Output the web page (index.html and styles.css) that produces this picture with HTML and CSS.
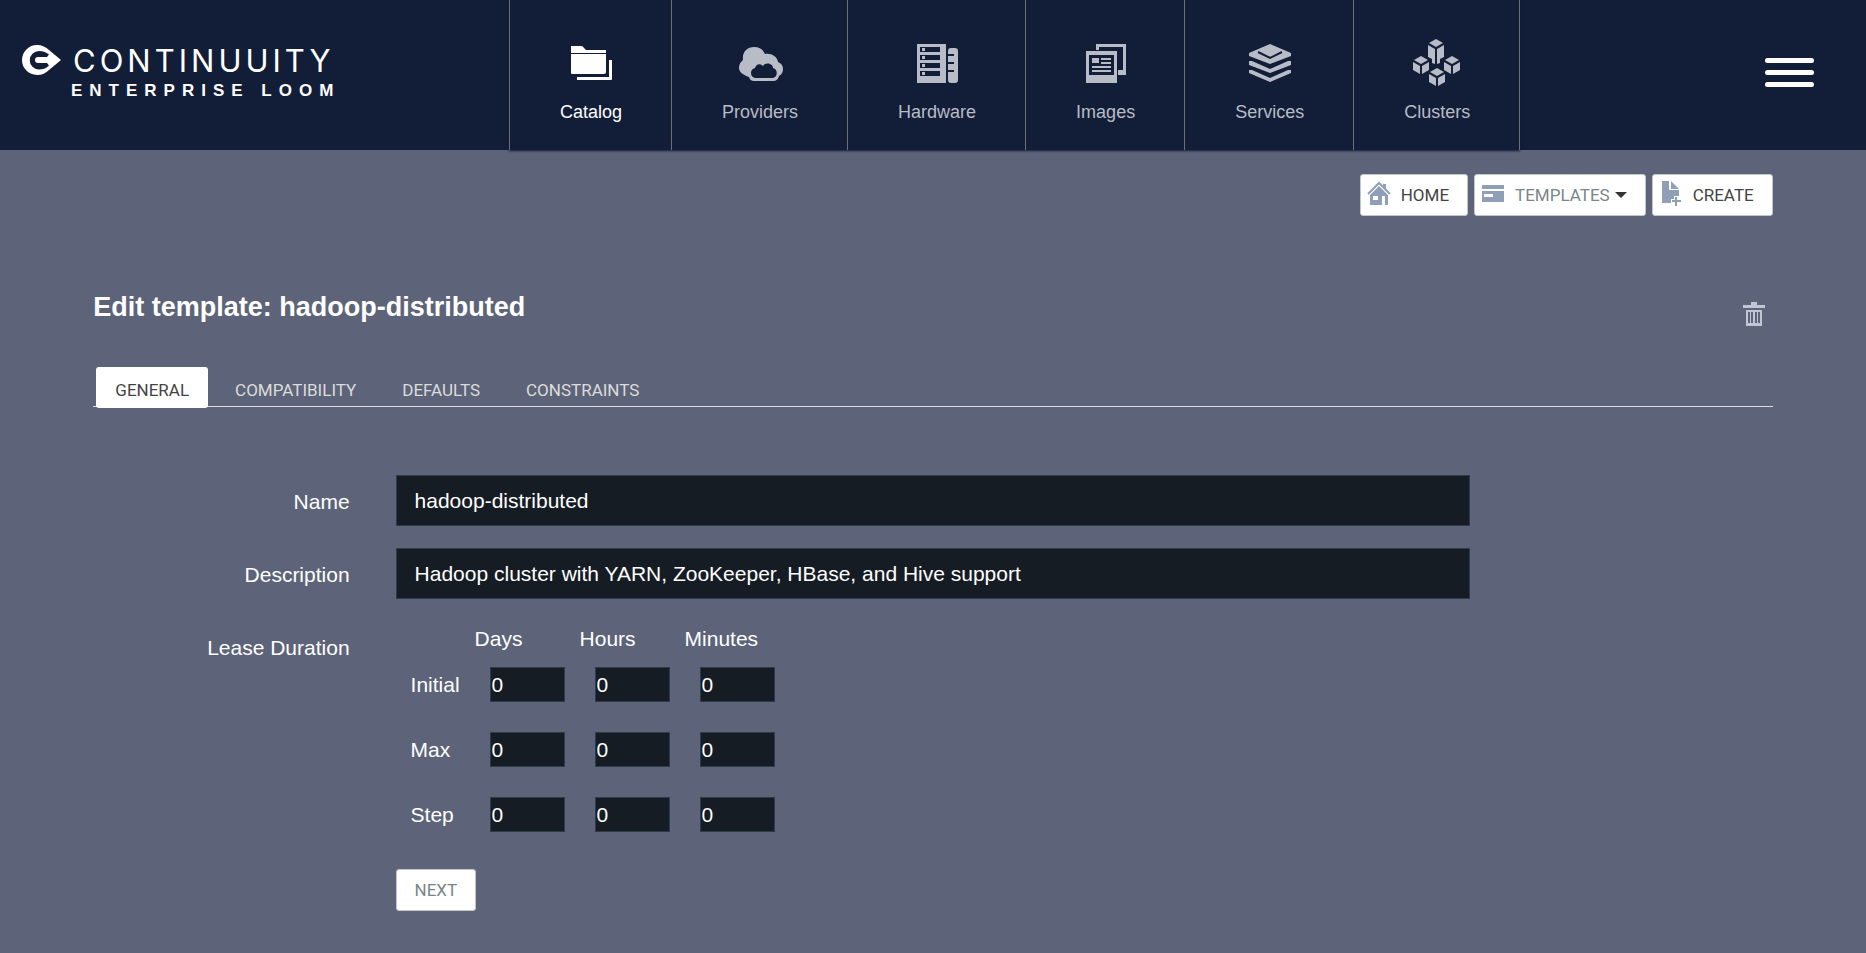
FILE: index.html
```html
<!DOCTYPE html>
<html lang="en">
<head>
<meta charset="utf-8">
<title>Continuuity Enterprise Loom</title>
<link rel="stylesheet" href="styles.css">
</head>
<body>
<header class="topbar">
  <a class="logo" href="#">
    <svg class="logo-mark" viewBox="0 0 40 30" width="40" height="30" aria-hidden="true">
      <path fill="#fff" d="M15 0C20 0 24 2 27 5L39 15 27 25C24 28 20 30 15 30A15 15 0 0 1 15 0Z"/>
      <path fill="#121d38" d="M27 9.500C24 7 20.500 6 17 6A9 9 0 0 0 17 24.500C20.500 24.500 24 23.500 27 20.500L25 18H16A3 3 0 0 1 16 12H25Z"/>
    </svg>
    <span class="logo-text"><span class="logo-name">CONTINUUITY</span><span class="logo-sub">ENTERPRISE LOOM</span></span>
  </a>
  <nav class="nav">
    <a class="nav-item active" href="#">
      <svg viewBox="0 0 48 48" width="48" height="48" aria-hidden="true"><g fill="currentColor"><path d="M4 6h10q2 0 3 2l2 2h20v3H4z"/><path d="M4 14h35v18q0 2-2 2H5q-1 0-1-1z"/><path d="M42 20h3v19q0 1-1 1H10v-3h32z"/></g></svg>
      <span>Catalog</span>
    </a>
    <a class="nav-item" href="#">
      <svg viewBox="0 0 48 48" width="48" height="48" aria-hidden="true"><path fill="currentColor" d="M13 37C7 35 3 32 3 28q0-5 4-8C6 12 11 7 18 7q8 0 11 7c6-1 12 2 13 8q5 2 5 7 0 5-4 7-1 5-6 5H18q-4 0-5-4z"/><path fill="#121d38" d="M19 38q-4-1-4-5 0-4 4-5c1-4 5-5 8-2 2-4 10-3 10 2 5 1 5 9 0 10z"/></svg>
      <span>Providers</span>
    </a>
    <a class="nav-item" href="#">
      <svg viewBox="0 0 48 48" width="48" height="48" aria-hidden="true"><path fill="currentColor" fill-rule="evenodd" d="M4 4h29v39H4zM7 7v5h20V7zm0 8v5h20v-5zm0 8v5h20v-5zm0 8v5h20v-5z"/><path fill="currentColor" d="M9 8h3v3H9zm0 8h3v3H9zm0 8h3v3H9zm0 8h3v3H9zM35 11q0-3 3-3h4q3 0 3 3v29q0 3-3 3h-4q-3 0-3-3V32h6v-2h-6v-6h6v-2h-6v-6h6v-2h-6z"/></svg>
      <span>Hardware</span>
    </a>
    <a class="nav-item" href="#">
      <svg viewBox="0 0 48 48" width="48" height="48" aria-hidden="true"><path fill="currentColor" fill-rule="evenodd" d="M4 11h31v32H4zM7 15v20h25V15z"/><path fill="currentColor" d="M10 18h7v5h-7zm9 0h10v2H19zm0 4h10v2H19zM10 26h19v2H10zm0 4h19v2H10zM14 4h30v31h-8v-5h5V7H17v3h-3z"/></svg>
      <span>Images</span>
    </a>
    <a class="nav-item" href="#">
      <svg viewBox="0 0 48 48" width="48" height="48" aria-hidden="true"><path fill="currentColor" d="M24 4L45 13v3L24 24 3 16v-3zM3 21h3l18 8 18-8h3v4L24 33 3 25zM3 30h3l18 8 18-8h3v3L24 42 3 33z"/><path fill="none" stroke="#121d38" stroke-width="2" d="M12 12l12 6 12-6"/></svg>
      <span>Services</span>
    </a>
    <a class="nav-item" href="#">
      <svg viewBox="0 0 48 48" width="48" height="48" aria-hidden="true"><g fill="currentColor"><path d="M23-1l7 4-7 4-7-4zM15 5l7 4v15l-3-1v-4l-4-2zM31 5l-7 4v15l3-1v-4l4-2z"/><path id="cube" d="M8 16l7 4-7 4-7-4zM0 22l7 4v8l-7-4zM16 22l-7 4v8l7-4z"/><use href="#cube" x="31"/><use href="#cube" x="16" y="12"/></g></svg>
      <span>Clusters</span>
    </a>
  </nav>
  <button class="menu" type="button" aria-label="Menu"><i></i><i></i><i></i></button>
</header>

<main class="page">
  <div class="toolbar">
    <a class="btn" href="#">
      <svg viewBox="0 0 24 24" width="24" height="24" aria-hidden="true"><path fill="none" stroke="#8f9fb8" stroke-width="2" d="M1 13L12 2l11 11"/><path fill="#8f9fb8" fill-rule="evenodd" d="M12 5l9 9v10h-3v-9h-3v9H3V14zM6 15v4h5v-4zM16 3h3v5l-3-3z"/></svg>
      <span>HOME</span>
    </a>
    <button class="btn muted" type="button">
      <svg viewBox="0 0 24 24" width="24" height="24" aria-hidden="true"><path fill="#8f9fb8" fill-rule="evenodd" d="M1 4h22v4H1zM1 10h22v11H1zM3 13v3h9v-3z"/></svg>
      <span>TEMPLATES</span><i class="caret"></i>
    </button>
    <a class="btn" href="#">
      <svg viewBox="0 0 24 24" width="24" height="24" aria-hidden="true"><path fill="#8f9fb8" d="M3 0h7v9h10v6h-5v3h-3v4H3zM12 0l8 8h-8zM16 16h2v3h4v2h-4v4h-2v-4h-3v-2h3z"/></svg>
      <span>CREATE</span>
    </a>
  </div>

  <div class="heading">
    <h1>Edit template: hadoop-distributed</h1>
    <button class="trash" type="button" aria-label="Delete template">
      <svg viewBox="0 0 24 24" width="24" height="24" aria-hidden="true"><path fill="#c0c6d2" fill-rule="evenodd" d="M9 0h6v3h8v3H1V3h8zM4 8h16v16H4zM6 10v11h2V10zm3 0v11h2V10zm4 0v11h2V10zm3 0v11h2V10z"/></svg>
    </button>
  </div>

  <nav class="tabs">
    <a class="tab active" href="#">GENERAL</a>
    <a class="tab" href="#">COMPATIBILITY</a>
    <a class="tab" href="#">DEFAULTS</a>
    <a class="tab" href="#">CONSTRAINTS</a>
  </nav>

  <form class="form">
    <label class="label" for="name">Name</label>
    <input class="field" id="name" type="text" value="hadoop-distributed">
    <label class="label" for="desc">Description</label>
    <input class="field" id="desc" type="text" value="Hadoop cluster with YARN, ZooKeeper, HBase, and Hive support">
    <span class="label" id="lease">Lease Duration</span>
    <table class="lease" aria-labelledby="lease">
      <thead>
        <tr><td></td><th scope="col">Days</th><th scope="col">Hours</th><th scope="col">Minutes</th></tr>
      </thead>
      <tbody>
        <tr><th scope="row">Initial</th><td><input type="text" value="0" aria-label="Initial days"></td><td><input type="text" value="0" aria-label="Initial hours"></td><td><input type="text" value="0" aria-label="Initial minutes"></td></tr>
        <tr><th scope="row">Max</th><td><input type="text" value="0" aria-label="Max days"></td><td><input type="text" value="0" aria-label="Max hours"></td><td><input type="text" value="0" aria-label="Max minutes"></td></tr>
        <tr><th scope="row">Step</th><td><input type="text" value="0" aria-label="Step days"></td><td><input type="text" value="0" aria-label="Step hours"></td><td><input type="text" value="0" aria-label="Step minutes"></td></tr>
      </tbody>
    </table>
    <button class="btn muted next" type="button">NEXT</button>
  </form>
</main>
</body>
</html>
```

FILE: styles.css
```css
* { box-sizing: border-box; }

body {
  margin: 0;
  background: #5d6479;
  color: #fff;
  font-family: "Liberation Sans", Arial, sans-serif;
  font-size: 21px;
  line-height: 24px;
}

a { color: inherit; text-decoration: none; }
button { font: inherit; cursor: pointer; }

.topbar {
  display: flex;
  height: 150px;
  background: #121d38;
}

.logo {
  flex: 0 1 509px;
  display: flex;
  align-items: flex-start;
  gap: 9px;
  padding: 45px 0 0 22px;
}
.logo-mark { flex: none; }
.logo-text { display: flex; flex-direction: column; }
.logo-name {
  padding-left: 2px;
  font-family: Inter, "Liberation Sans", sans-serif;
  font-size: 31px;
  font-weight: 400;
  line-height: 32px;
  letter-spacing: 4px;
}
.logo-sub {
  font-size: 17px;
  font-weight: bold;
  line-height: 28px;
  letter-spacing: 7px;
  white-space: nowrap;
}

.nav {
  display: flex;
  border-left: 1px solid #6c6f78;
  box-shadow: 0 1px 2px #121d38;
}
.nav-item {
  display: flex;
  flex-direction: column;
  align-items: center;
  gap: 12px;
  padding: 40px 49px 0 50px;
  border-right: 1px solid #6c6f78;
  color: #b8bcc6;
  font-size: 18px;
}
.nav-item svg { overflow: visible; }
.nav-item.active { color: #fff; }

.menu {
  display: flex;
  flex-direction: column;
  gap: 7px;
  align-self: flex-start;
  margin: 58px 52px 0 auto;
  padding: 0;
  border: 0;
  background: none;
}
.menu i {
  width: 49px;
  height: 5px;
  border-radius: 3px;
  background: #fff;
}

.page {
  width: 90%;
  margin: 0 auto;
  padding: 24px 0 40px;
}

.toolbar {
  display: flex;
  justify-content: flex-end;
  gap: 6px;
}
.btn {
  display: inline-flex;
  align-items: center;
  height: 42px;
  padding: 0 18px 0 6px;
  border: 1px solid #c4c6c9;
  border-radius: 3px;
  background: #fff;
  color: #444;
  font-family: Roboto, "Liberation Sans", sans-serif;
  font-size: 17px;
}
.btn svg {
  margin: 0 10px 4px 0;
  overflow: visible;
}
.btn.muted { color: #78868c; }
.caret {
  margin-left: 5px;
  border: 6px solid transparent;
  border-top-color: #333;
  border-bottom: 0;
}

.heading {
  display: flex;
  justify-content: space-between;
  align-items: flex-start;
  padding: 75px 7px 0 0;
}
h1 {
  margin: 0;
  font-size: 27px;
  line-height: 32px;
}
.trash {
  display: flex;
  margin-top: 11px;
  padding: 0;
  border: 0;
  background: none;
}

.tabs {
  display: flex;
  gap: 8px;
  margin-top: 41px;
  padding-left: 3px;
  border-bottom: 1px solid #e0e0e0;
}
.tab {
  margin-bottom: -2px;
  padding: 11px 19px 6px;
  border-radius: 3px;
  color: #dcdcdc;
  font-family: Roboto, "Liberation Sans", sans-serif;
  font-size: 17px;
}
.tab.active {
  background: #fff;
  color: #444;
}

.form {
  display: grid;
  grid-template-columns: 18% 64%;
  row-gap: 22px;
  margin-top: 68px;
}
.label {
  padding: 15px 46px 0 0;
  text-align: right;
}
.field,
.lease input {
  border: 1px solid #2f3b48;
  border-radius: 0;
  background: #151c24;
  color: #fff;
  font: inherit;
}
.field {
  width: 100%;
  height: 51px;
  padding: 0 18px;
}

.lease {
  justify-self: start;
  margin: 4px 0 0 15px;
  border-collapse: collapse;
}
.lease th,
.lease td {
  padding: 0;
  font-weight: normal;
  text-align: left;
}
.lease thead th { height: 27px; width: 105px; }
.lease thead td { width: 64px; }
.lease tbody tr { height: 65px; }
.lease tbody td { padding-left: 15px; }
.lease input {
  display: block;
  width: 75px;
  height: 35px;
  padding: 0 1px;
}

.next {
  grid-column: 2;
  justify-self: start;
  padding: 0 18px;
}
```
